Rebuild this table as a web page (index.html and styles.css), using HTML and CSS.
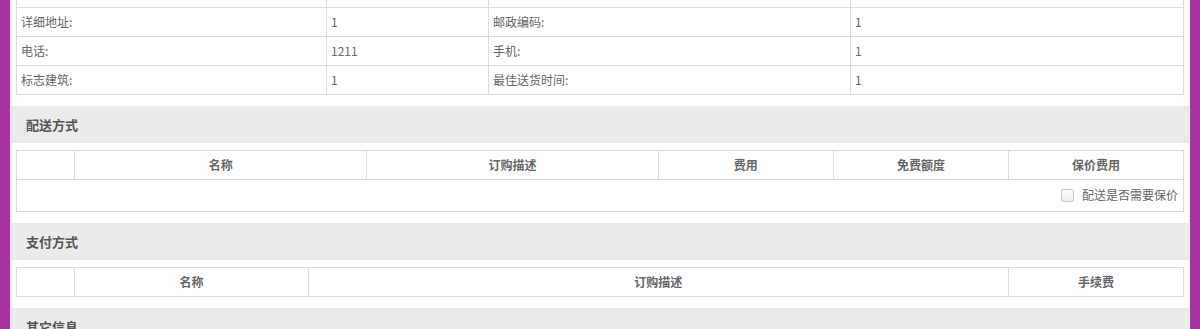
FILE: index.html
```html
<!DOCTYPE html>
<html lang="zh-CN">
<head>
<meta charset="utf-8">
<title>订单信息</title>
<link rel="stylesheet" href="styles.css">
</head>
<body>
<div class="frame">
  <div class="rail"></div>
  <main class="content">
    <div class="scroll">
      <table class="grid info">
        <colgroup>
          <col class="c-l1"><col class="c-v1"><col class="c-l2"><col>
        </colgroup>
        <tr><td class="lbl"></td><td class="val"></td><td class="lbl"></td><td class="val"></td></tr>
        <tr><td class="lbl">详细地址:</td><td class="val">1</td><td class="lbl">邮政编码:</td><td class="val">1</td></tr>
        <tr><td class="lbl">电话:</td><td class="val">1211</td><td class="lbl">手机:</td><td class="val">1</td></tr>
        <tr><td class="lbl">标志建筑:</td><td class="val">1</td><td class="lbl">最佳送货时间:</td><td class="val">1</td></tr>
      </table>

      <h3 class="section-title">配送方式</h3>
      <table class="grid list">
        <colgroup>
          <col class="w5"><col class="w25"><col class="w25"><col class="w15"><col class="w15"><col class="w15">
        </colgroup>
        <tr class="head"><th></th><th>名称</th><th>订购描述</th><th>费用</th><th>免费额度</th><th>保价费用</th></tr>
        <tr class="foot"><td colspan="6">
          <label class="insure"><input type="checkbox" class="chk"><span>配送是否需要保价</span></label>
        </td></tr>
      </table>

      <h3 class="section-title">支付方式</h3>
      <table class="grid list">
        <colgroup>
          <col class="w5"><col class="w20"><col class="w60"><col class="w15">
        </colgroup>
        <tr class="head"><th></th><th>名称</th><th>订购描述</th><th>手续费</th></tr>
      </table>

      <h3 class="section-title">其它信息</h3>
    </div>
  </main>
  <div class="rail"></div>
</div>
</body>
</html>
```

FILE: styles.css
```css
html, body {
  margin: 0;
  padding: 0;
  height: 100%;
  overflow: hidden;
  background: #fff;
}

body {
  font-family: "Noto Sans CJK SC", "Noto Sans", "Liberation Sans", sans-serif;
  font-size: 12px;
  color: #666;
}

.frame {
  display: flex;
  height: 100%;
}

.rail {
  width: 10px;
  flex: 0 0 10px;
  background: #a834a3;
}

.content {
  flex: 1 1 auto;
  overflow: hidden;
  background: #fff;
}

/* page is scrolled a little: first row sits above the viewport */
.scroll {
  padding: 0 6px;
  margin-top: -22px;
}

.grid {
  width: 1168px;
  border-collapse: collapse;
  table-layout: fixed;
}

.grid td,
.grid th {
  border: 1px solid #dcdcdc;
  height: 28px;
  padding: 0 4px;
  line-height: 16px;
  white-space: nowrap;
}

.info .c-l1 { width: 310px; }
.info .c-v1 { width: 162px; }
.info .c-l2 { width: 362px; }

.info .lbl { color: #666; }
.info .val { color: #666; }

.w5 { width: 5%; }
.w15 { width: 15%; }
.w20 { width: 20%; }
.w25 { width: 25%; }
.w60 { width: 60%; }

.list th {
  font-weight: bold;
  text-align: center;
  color: #666;
}

.list .foot td {
  height: 31px;
  text-align: right;
  padding-right: 5px;
  vertical-align: top;
}

.insure {
  display: inline-flex;
  align-items: center;
  margin-top: 7px;
  color: #666;
}

.chk {
  width: 13px;
  height: 13px;
  margin: 0 8px 0 0;
  appearance: none;
  -webkit-appearance: none;
  border: 1px solid #c9c9c9;
  border-radius: 2px;
  background: linear-gradient(#fff, #ececec);
  box-sizing: border-box;
}

.section-title {
  margin: 11px -5px 7px;
  height: 37px;
  line-height: 37px;
  padding: 0 15px;
  background: #ebebeb;
  font-size: 13px;
  font-weight: bold;
  color: #555;
}
```
